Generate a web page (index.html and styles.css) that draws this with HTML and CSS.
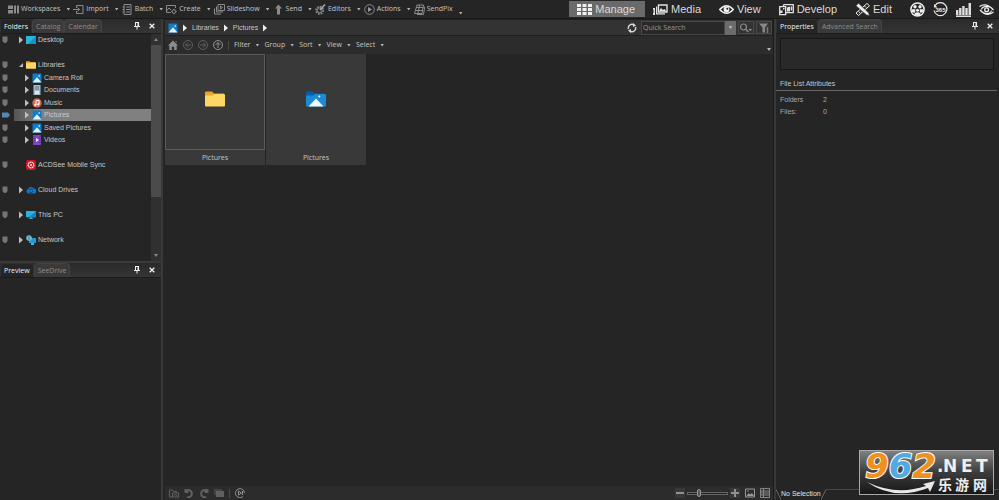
FILE: index.html
```html
<!DOCTYPE html>
<html lang="en">
<head>
<meta charset="utf-8">
<title>ACDSee - Pictures</title>
<link rel="stylesheet" href="styles.css">
</head>
<body>
<svg class="defs" aria-hidden="true">
  <symbol id="pin" viewBox="0 0 8 8"><path d="M2 .5h4M2.500 .5v4M5 .5v4M5.500 .5v4M1 4.500h6M4 4.500v3" stroke="currentColor" fill="none"/></symbol>
  <symbol id="close" viewBox="0 0 8 8"><path d="M1.700 1.700l4.600 4.600M6.300 1.700L1.700 6.300" stroke="currentColor" stroke-width="1.300" fill="none"/></symbol>
  <symbol id="flag" viewBox="0 0 6 8"><path d="M.5 .5h5v4.700L3.700 7H2.300L.5 5.200z" fill="#757575"/></symbol>
  <symbol id="flag-on" viewBox="0 0 8 6"><path d="M0 .5h6L8 3 6 5.500H0z" fill="#5785ae"/></symbol>
  <symbol id="right" viewBox="0 0 4 8"><path d="M0 .5L4 4 0 7.500z" fill="currentColor"/></symbol>
  <symbol id="open" viewBox="0 0 4 8"><path d="M4 2v4H0z" fill="currentColor"/></symbol>
  <symbol id="picture" viewBox="0 0 10 10"><rect x=".5" y=".5" width="9" height="9" rx=".6" fill="#107cc9"/><path d="M.5 9.500L5 4.300 9.500 9.500z" fill="#e4f5ff"/><circle cx="7.200" cy="3" r=".8" fill="#fff"/></symbol>
  <symbol id="folder" viewBox="0 0 20 16"><path d="M0 1.500Q0 .5 1 .5h6l2 2h10v4H0z" fill="#e9a72c"/><path d="M0 4.500h7.500l1.500-1.500h10q1 0 1 1V14.500q0 1-1 1H1q-1 0-1-1z" fill="#fdd663"/></symbol>
  <symbol id="desktop" viewBox="0 0 10 10"><rect y="1" width="10" height="8" rx=".5" fill="#29b8dc"/><path d="M10 1v8H2z" fill="#1791c9"/></symbol>
  <symbol id="monitor" viewBox="0 0 11 9"><rect width="11" height="7" rx=".5" fill="#28b2e0"/><path d="M11 0v7H3z" fill="#1687c7"/><path d="M4.500 7h2v1h1.500v1H3V8h1.500z" fill="#4b9dc5"/></symbol>
</svg>

<div class="app">
  <header class="topbar">
    <nav class="menu" aria-label="Main">
      <button><svg viewBox="0 0 11 11"><path d="M0 1.500h5v3.500H0zM0 6h5v3.500H0zM6 1.500h2v8H6zM9 1.500h2v8H9z" fill="#8b8b8b"/></svg>Workspaces<i class="caret"></i></button>
      <button><svg viewBox="0 0 11 11"><path d="M3.500 4V1.500h6.500v8H3.500V7M0 5.500h6.500M4.500 3.500l2 2-2 2" class="line"/></svg>Import<i class="caret"></i></button>
      <button><svg viewBox="0 0 11 11"><path d="M2 .5h7v10H2zM4 3h4M4 5.500h4M4 8h4M.5 3h2M.5 5.500h2M.5 8h2" class="line"/></svg>Batch<i class="caret"></i></button>
      <button><svg viewBox="0 0 11 11"><path d="M5 8.500H.5v-7h9V4M.5 7l2.500-3 2 2" class="line"/><circle cx="8" cy="7.500" r="1.800" class="line"/><path d="M8 4.800v1M8 9.200v1M5.300 7.500h1M9.700 7.500h1" class="line"/></svg>Create<i class="caret"></i></button>
      <button><svg viewBox="0 0 11 11"><path d="M4 .5h6.500v6H4zM2.500 2.500v5.500H9M.5 4.500v5.500H7M6.500 2l2 1.500-2 1.500z" class="line"/></svg>Slideshow<i class="caret"></i></button>
      <button><svg viewBox="0 0 11 11"><path d="M5.500 .5L9 4.500H7v6H4v-6H2z" fill="#8b8b8b"/></svg>Send<i class="caret"></i></button>
      <button><svg viewBox="0 0 11 11"><circle cx="4.700" cy="6.300" r="3.600" fill="none" stroke="#8b8b8b" stroke-width="1.800" stroke-dasharray="1.700 1.070"/><circle cx="4.700" cy="6.300" r="2.400" class="line"/><path d="M5 6l5-5.500" stroke="#aaa" stroke-width="1.500"/></svg>Editors<i class="caret"></i></button>
      <button><svg viewBox="0 0 11 11"><circle cx="5.500" cy="5.500" r="4.800" class="line"/><path d="M4 3l4 2.500L4 8z" fill="#999"/></svg>Actions<i class="caret"></i></button>
      <button><svg viewBox="0 0 11 11"><path d="M3 1h6.500L8 9.500H.5zM5.500 1L4 9.500M2.200 3.500h7M1.500 6.500h7M9.500 3h1.200L9.500 10.500H3" class="line"/></svg>SendPix<i class="caret low"></i></button>
    </nav>
    <nav class="modes" aria-label="Modes">
      <button class="mode active"><svg viewBox="0 0 15 13"><path d="M0 1h4v3H0zM5.500 1h4v3h-4zM11 1h4v3h-4zM0 5h4v3H0zM5.500 5h4v3h-4zM11 5h4v3h-4zM0 9h4v3H0zM5.500 9h4v3h-4zM11 9h4v3h-4z" fill="#f0f0f0"/></svg>Manage</button>
      <button class="mode"><svg viewBox="0 0 15 13"><path d="M5.500 2h8.500v7H5.500z" fill="none" stroke="#e2e2e2" stroke-width="1.400"/><path d="M6 8l2-3 2 2 1.500-1L13.500 8.500z" fill="#e2e2e2"/><path d="M3 3.500h1.300v6.700H12V11.500H3zM.5 5h1.500v7H.5zM0 5h2v1.500H0zM0 10h2v2H0z" fill="#e2e2e2"/></svg>Media</button>
      <button class="mode"><svg viewBox="0 0 15 13"><path d="M.7 6.500Q7.500-1 14.300 6.500 7.500 14 .7 6.500z" fill="#222" stroke="#eee" stroke-width="1.500"/><circle cx="7.500" cy="6.500" r="2.900" fill="#eee"/><circle cx="8.300" cy="5.700" r="1" fill="#222"/></svg>View</button>
      <button class="mode"><svg viewBox="0 0 15 13"><path d="M4.500 1.700h9.800v8H7M4.500 1.700v2M.7 3.700h6v8h-6z" fill="none" stroke="#e2e2e2" stroke-width="1.300"/><path d="M1 7.500h2.500v2.500H1zM8 4.500l3-1v5H8zM11.700 3.500h1.500v4h-1.500zM4 5h1.500v1.500H4z" fill="#e2e2e2"/></svg>Develop</button>
      <button class="mode"><svg viewBox="0 0 15 13"><path d="M12 .5l2.500 2.300L3.500 12.500 1 10z" fill="#262626" stroke="#eee"/><path d="M9.500 3l1.500 1.500M7.500 5L9 6.500M5.500 6.800L7 8.200M3.500 8.500L5 10" stroke="#eee"/><path d="M1 2.800L3.500 .3 13.500 9.700l1 2.800-3-.6z" fill="#eee" stroke="#262626" stroke-width=".5"/></svg>Edit</button>
      <button class="tool" aria-label="People"><svg viewBox="0 0 15 15"><circle cx="7.500" cy="7.500" r="6.600" fill="none" stroke="#eee" stroke-width="1.500"/><circle cx="5" cy="4.700" r="1.700" fill="#eee"/><circle cx="10" cy="4.700" r="1.700" fill="#eee"/><path d="M1.500 7.200h3.800v2L4.500 11 2 10zM13.500 7.200H9.700v2l.8 1.800 2.500-1zM4.500 13v-1.500q3-2.500 6 0V13l-3 1z" fill="#eee"/><circle cx="7.500" cy="8.200" r="1.500" fill="#eee"/></svg></button>
      <button class="tool" aria-label="365"><svg viewBox="0 0 15 15"><path d="M2 3.500A6.500 6.500 0 1 1 1 8.500" fill="none" stroke="#eee" stroke-width="1.200"/><path d="M1 2v3.500h3.500z" fill="#eee"/><text x="7.500" y="9.700" text-anchor="middle" class="days">365</text></svg></button>
      <button class="tool" aria-label="Dashboard"><svg viewBox="0 0 15 15"><path d="M0 8h2.400v5H0zM3.100 6h2.400v7H3.100zM6.200 4h2.400v9H6.200zM9.300 6h2.400v7H9.300zM12.500 1H15v12h-2.500zM0 13.600h15V15H0z" fill="#dedede"/></svg></button>
      <button class="tool" aria-label="Sync"><svg viewBox="0 0 15 15"><path d="M.5 4.500Q7 0 14.500 8 12 4.500 8 4.300 3 4.300 2.500 7.500M14.500 10Q8 15.500 1 8 4 12 8 11.500 12 11 12.500 8.500" fill="none" stroke="#eee" stroke-width="1.200"/><circle cx="7.600" cy="7.800" r="1.900" fill="none" stroke="#eee" stroke-width="1.300"/></svg></button>
    </nav>
  </header>

  <main class="work">
    <aside class="left">
      <section class="folders">
        <div class="tabs"><button class="tab on">Folders</button><button class="tab">Catalog</button><button class="tab">Calendar</button>
          <span class="panel-tools"><button aria-label="Pin"><svg><use href="#pin"/></svg></button><button aria-label="Close"><svg><use href="#close"/></svg></button></span></div>
        <div class="tree-area">
          <ul class="tree">
            <li><svg class="flag"><use href="#flag"/></svg><span class="node"><svg class="arrow"><use href="#right"/></svg><svg class="ico"><use href="#desktop"/></svg>Desktop</span></li>
            <li></li>
            <li><svg class="flag"><use href="#flag"/></svg><span class="node"><svg class="arrow"><use href="#open"/></svg><svg class="ico"><use href="#folder"/></svg>Libraries</span></li>
            <li><svg class="flag"><use href="#flag"/></svg><span class="node child"><svg class="arrow"><use href="#right"/></svg><svg class="ico"><use href="#picture"/></svg>Camera Roll</span></li>
            <li><svg class="flag"><use href="#flag"/></svg><span class="node child"><svg class="arrow"><use href="#right"/></svg><svg class="ico" viewBox="0 0 10 10"><path d="M1.500 0h7v10h-7z" fill="#a9bccb"/><path d="M3 2h4M3 4h4" stroke="#4d7ba0"/><path d="M3 6h4v3H3z" fill="#d9e6ef"/></svg>Documents</span></li>
            <li><svg class="flag"><use href="#flag"/></svg><span class="node child"><svg class="arrow"><use href="#right"/></svg><svg class="ico" viewBox="0 0 10 10"><circle cx="5" cy="5" r="4.700" fill="#d9644e"/><path d="M4 7V2.800l3-.6v4" stroke="#fff" fill="none"/><circle cx="3.300" cy="7" r="1.100" fill="#fff"/><circle cx="6.300" cy="6.300" r="1.100" fill="#fff"/></svg>Music</span></li>
            <li class="selected"><svg class="flag wide"><use href="#flag-on"/></svg><span class="node child"><svg class="arrow"><use href="#right"/></svg><svg class="ico"><use href="#picture"/></svg>Pictures</span></li>
            <li><svg class="flag"><use href="#flag"/></svg><span class="node child"><svg class="arrow"><use href="#right"/></svg><svg class="ico"><use href="#picture"/></svg>Saved Pictures</span></li>
            <li><svg class="flag"><use href="#flag"/></svg><span class="node child"><svg class="arrow"><use href="#right"/></svg><svg class="ico" viewBox="0 0 10 10"><rect x="1" width="8" height="10" rx=".8" fill="#8244c9"/><path d="M4 3l3 2-3 2z" fill="#f2e6ff"/><path d="M2 1v8M8 1v8" stroke="#4b2485" stroke-dasharray="1 1"/></svg>Videos</span></li>
            <li></li>
            <li><svg class="flag"><use href="#flag"/></svg><span class="node"><span class="arrow"></span><svg class="ico" viewBox="0 0 10 10"><rect width="10" height="10" rx="2" fill="#cc1522"/><circle cx="5" cy="5" r="2.800" fill="none" stroke="#ffe1e1" stroke-width="1.300" stroke-dasharray="1.500 .4"/><circle cx="5" cy="5" r="1" fill="#ffe1e1"/></svg>ACDSee Mobile Sync</span></li>
            <li></li>
            <li><svg class="flag"><use href="#flag"/></svg><span class="node"><svg class="arrow"><use href="#right"/></svg><svg class="ico" viewBox="0 0 10 10"><path d="M2.500 8.500a2.300 2.300 0 0 1-.3-4.500 3 3 0 0 1 5.500-.5A2.500 2.500 0 0 1 8 8.500z" fill="#1477c4"/><path d="M3 5.500a2.200 2.200 0 0 1 3.800-.8M7 6a2.200 2.200 0 0 1-3.800 1" stroke="#063563" fill="none" stroke-width=".9"/></svg>Cloud Drives</span></li>
            <li></li>
            <li><svg class="flag"><use href="#flag"/></svg><span class="node"><svg class="arrow"><use href="#right"/></svg><svg class="ico"><use href="#monitor"/></svg>This PC</span></li>
            <li></li>
            <li><svg class="flag"><use href="#flag"/></svg><span class="node"><svg class="arrow"><use href="#right"/></svg><svg class="ico" viewBox="0 0 10 10"><rect x="3" y="3" width="7" height="5" fill="#2397cf"/><path d="M5 8h3v2H5z" fill="#44b3d9"/><circle cx="3" cy="3" r="2.700" fill="#8fd3ef"/><path d="M1 2h4M3 .5v5M1 4h4" stroke="#266f99" stroke-width=".6"/></svg>Network</span></li>
          </ul>
          <div class="scroll"><i class="up"></i><i class="thumb"></i><i class="down"></i></div>
        </div>
      </section>
      <section class="preview">
        <div class="tabs"><button class="tab on">Preview</button><button class="tab">SeeDrive</button>
          <span class="panel-tools"><button aria-label="Pin"><svg><use href="#pin"/></svg></button><button aria-label="Close"><svg><use href="#close"/></svg></button></span></div>
      </section>
    </aside>

    <section class="center">
      <div class="pathbar">
        <nav class="crumbs" aria-label="Path"><svg class="ico"><use href="#picture"/></svg><svg class="arrow"><use href="#right"/></svg><a href="#">Libraries</a><svg class="arrow"><use href="#right"/></svg><a href="#">Pictures</a><svg class="arrow"><use href="#right"/></svg></nav>
        <button class="refresh" aria-label="Refresh"><svg viewBox="0 0 10 10"><path d="M1.500 6A3.600 3.600 0 0 1 7 2M8.500 4A3.600 3.600 0 0 1 3 8" fill="none" stroke="#ddd" stroke-width="1.400"/><path d="M6 0l3 2.500-3 1.500zM4 6v4L1 7.500z" fill="#ddd"/></svg></button>
        <input class="search" type="text" placeholder="Quick Search" aria-label="Quick Search">
        <button class="drop" aria-label="Search history"><i class="caret"></i></button>
        <button class="sq" aria-label="Search"><svg viewBox="0 0 14 10"><circle cx="4.500" cy="4" r="3" fill="none" stroke="#8a8a8a" stroke-width="1.200"/><path d="M6.500 6.200L9.500 9" stroke="#8a8a8a" stroke-width="1.500"/><path d="M9.500 6h3.500l-1.800 2z" fill="#999"/></svg></button>
        <button class="sq" aria-label="Filter"><svg viewBox="0 0 14 10"><path d="M2 .5h9L8 4.500V9.500H5.500v-5z" fill="#888"/><path d="M10.500 4v6" stroke="#777" stroke-width="1.500"/></svg></button>
      </div>
      <div class="toolbar">
        <button aria-label="Home"><svg viewBox="0 0 10 10"><path d="M5 .5L10 5.500H8.700V10H6.200V6.800H3.800V10H1.300V5.500H0zM7.300 1h1.200v2z" fill="#8c8c8c"/></svg></button>
        <button aria-label="Back"><svg viewBox="0 0 10 10" class="dim"><circle cx="5" cy="5" r="4.500"/><path d="M8 5H2.500M5 2.500L2.500 5 5 7.500"/></svg></button>
        <button aria-label="Forward"><svg viewBox="0 0 10 10" class="dim"><circle cx="5" cy="5" r="4.500"/><path d="M2 5h5.500M5 2.500L7.500 5 5 7.500"/></svg></button>
        <button aria-label="Up"><svg viewBox="0 0 10 10" class="lit"><circle cx="5" cy="5" r="4.500"/><path d="M5 8V2.500M2.500 5L5 2.500 7.500 5"/></svg></button>
        <i class="sep"></i>
        <div class="filters"><button>Filter<i class="caret"></i></button><button>Group<i class="caret"></i></button><button>Sort<i class="caret"></i></button><button>View<i class="caret"></i></button><button>Select<i class="caret"></i></button></div>
        <i class="caret low end"></i>
      </div>
      <div class="files">
        <figure class="tile focus"><div class="thumbnail"><svg><use href="#folder"/></svg></div><figcaption>Pictures</figcaption></figure>
        <figure class="tile"><div class="thumbnail"><svg viewBox="0 0 20 16"><path d="M0 1.500Q0 .5 1 .5h6l2 2h10v4H0z" fill="#0a5cab"/><path d="M0 4.500h7.500l1.500-1.500h10q1 0 1 1V14.500q0 1-1 1H1q-1 0-1-1z" fill="#198bd7"/><path d="M2.500 15.500L10 7.500l7.500 8z" fill="#f3faff"/><circle cx="13.300" cy="5.500" r="1" fill="#fff"/></svg></div><figcaption>Pictures</figcaption></figure>
      </div>
      <div class="bottombar">
        <button aria-label="Add to basket"><svg viewBox="0 0 10 10" class="dim"><path d="M.5 2h3l1 1.500h3V5M.5 2v7h9V5h-6v4M5 8l1.500-2L8 8"/></svg></button>
        <button aria-label="Rotate left"><svg viewBox="0 0 10 10" class="dim thick"><path d="M3 9a3.600 3.600 0 1 0-.5-6.500M1.500 1v3h3"/></svg></button>
        <button aria-label="Rotate right"><svg viewBox="0 0 10 10" class="dim thick"><path d="M7 9a3.600 3.600 0 1 1 .5-6.500M8.500 1v3h-3"/></svg></button>
        <button aria-label="Compare"><svg viewBox="0 0 10 10"><path d="M0 1h8v6H0z" fill="#444"/><path d="M2 3h8v6H2z" fill="#606060"/></svg></button>
        <i class="sep"></i>
        <button aria-label="Play"><svg viewBox="0 0 10 10" class="lit"><path d="M8 8.500A4.500 4.500 0 1 1 9.500 5M7.500 3v4"/><path d="M3.500 3l3 2-3 2z"/></svg></button>
        <div class="zoom">
          <button class="step" aria-label="Zoom out"><svg viewBox="0 0 10 10" class="lit thick"><path d="M1 5h8"/></svg></button>
          <input type="range" min="0" max="100" value="26" aria-label="Thumbnail size">
          <button class="step" aria-label="Zoom in"><svg viewBox="0 0 10 10" class="lit thick"><path d="M1 5h8M5 1v8"/></svg></button>
          <button class="view" aria-label="Thumbnails"><svg viewBox="0 0 10 10"><path d="M.5 1h9v8h-9z" stroke="#999" fill="none"/><path d="M1.500 8l2-3 1.500 1.500 2-1.500 2 3z" fill="#999"/><circle cx="3" cy="3" r=".8" fill="#999"/></svg></button>
          <button class="view" aria-label="Details"><svg viewBox="0 0 10 10"><path d="M.5 .5h9v9h-9zM.5 3h9M.5 5h9M.5 7h9M3.500 .5v9" stroke="#858585" fill="none"/></svg></button>
        </div>
      </div>
    </section>

    <aside class="right">
      <div class="tabs"><button class="tab on">Properties</button><button class="tab">Advanced Search</button>
        <span class="panel-tools"><button aria-label="Pin"><svg><use href="#pin"/></svg></button><button aria-label="Close"><svg><use href="#close"/></svg></button></span></div>
      <div class="summary"></div>
      <h2>File List Attributes</h2>
      <dl><dt>Folders</dt><dd>2</dd><dt>Files:</dt><dd>0</dd></dl>
      <div class="status"><svg viewBox="0 0 5 10"><path d="M0 0l5 10" class="edge"/></svg><span>No Selection</span><svg viewBox="0 0 5 10"><path d="M5 0L0 10" class="edge"/></svg><i></i></div>
    </aside>
  </main>

  <div class="watermark">
    <svg viewBox="0 0 133 43" role="img" aria-label="962.NET 乐游网">
      <text x="5" y="27" class="digits"><tspan class="orange">9</tspan><tspan class="blue">6</tspan><tspan class="orange">2</tspan></text>
      <text y="21" class="net"><tspan x="77">.</tspan><tspan x="83">N</tspan><tspan x="101">E</tspan><tspan x="116">T</tspan></text>
      <path d="M7 31Q36 45 66 35l-3-2 12-3-5 11-2-4Q34 50 7 31z" fill="#e8e8e8"/>
      <text y="39" class="cn"><tspan x="78">乐</tspan><tspan x="95">游</tspan><tspan x="113">网</tspan></text>
    </svg>
  </div>
</div>
</body>
</html>
```
FILE: styles.css
```css
* { box-sizing: border-box; }
body { margin: 0; background: #252525; color: #c6c6c6; font: 7px/10px "Liberation Sans", Arial, sans-serif; }
button { appearance: none; border: 0; margin: 0; padding: 0; background: none; color: inherit; font: inherit; display: flex; align-items: center; }
svg { display: block; flex: none; }
a { color: inherit; text-decoration: none; }
i { flex: none; }
.defs { position: absolute; width: 0; height: 0; }
.line { fill: none; stroke: #8b8b8b; }
.dim { fill: none; stroke: #606060; }
.lit { fill: none; stroke: #919191; }
.thick { stroke-width: 2; }
.caret { width: 4px; height: 3px; background: #b5b5b5; clip-path: polygon(0 0, 100% 0, 50% 100%); }
.sep { width: 1px; height: 9px; background: #4c4c4c; }

.app { position: relative; height: 100vh; display: flex; flex-direction: column; }
.topbar { height: 18px; display: flex; align-items: center; background: #252525; }
.menu { display: flex; gap: 3px; padding-left: 8px; font-family: "Open Sans", "Noto Sans", sans-serif; }
.menu svg { width: 11px; height: 11px; margin-right: 2px; }
.menu .caret { margin-left: 6px; }
.low { align-self: flex-end; }
.modes { display: flex; align-items: center; margin-left: auto; padding-right: 5px; }
.mode { height: 16px; padding: 0 10px 0 8px; gap: 3px; font-size: 11px; color: #dadada; }
.mode svg { width: 15px; height: 13px; }
.mode.active { background: #6a6a6a; }
.tool { margin-left: 8px; }
.tool svg { width: 15px; height: 15px; }
.days { font: bold 6px "Liberation Sans", sans-serif; fill: #eee; }

.work { flex: 1; min-height: 0; display: grid; grid-template-columns: 163px minmax(0, 1fr) 225px; border-top: 1px solid #191919; }
.left { display: flex; flex-direction: column; border-right: 2px solid #393939; min-height: 0; }
.tabs { display: flex; height: 15px; background: linear-gradient(#2a2a2a, #353535); border-bottom: 1px solid #1c1c1c; font-family: "Open Sans", "Noto Sans", sans-serif; }
.tab { padding: 0 3px; color: #8d8d8d; background: #3a3a3a; border: 1px solid #434343; border-bottom: 0; border-radius: 4px 4px 0 0; }
.tab.on { background: #252525; color: #f0f0f0; border-color: #303030; }
.panel-tools { display: flex; gap: 7px; margin-left: auto; padding-right: 5px; color: #eee; }
.panel-tools svg { width: 8px; height: 8px; }
.folders { display: flex; flex-direction: column; border-bottom: 2px solid #393939; }
.preview { flex: 1; }
.tree-area { display: flex; height: 227px; }
.tree { flex: 1; height: 212px; margin: 0; padding: 0; list-style: none; display: grid; grid-template-rows: repeat(17, minmax(0, 1fr)); }
.tree li { display: flex; align-items: center; }
.flag { width: 6px; height: 8px; margin: 0 6px 0 2px; }
.flag.wide { width: 8px; height: 6px; margin-right: 4px; }
.node { flex: 1; align-self: stretch; display: flex; align-items: center; padding-left: 5px; }
.node.child { padding-left: 11px; }
.arrow { width: 4px; height: 8px; flex: none; color: #bdbdbd; }
.ico { width: 10px; height: 10px; margin: 0 2px 0 3px; }
.selected .node { background: linear-gradient(90deg, #555, #808080 20%); color: #c9c9c9; }
.scroll { width: 10px; background: #303030; display: flex; flex-direction: column; align-items: center; padding: 4px 0; }
.up, .down { width: 4px; height: 3px; background: #888; clip-path: polygon(50% 0, 100% 100%, 0 100%); }
.down { clip-path: polygon(0 0, 100% 0, 50% 100%); margin-top: auto; }
.thumb { width: 10px; height: 152px; margin-top: 4px; background: #4b4b4b; }

.center { display: flex; flex-direction: column; min-height: 0; margin-left: 2px; border-right: 1px solid #1b1b1b; font-family: "Open Sans", "Noto Sans", sans-serif; }
.pathbar { height: 17px; display: flex; align-items: center; background: #333; border: 1px solid #202020; border-left: 0; }
.crumbs { flex: 1; display: flex; align-items: center; gap: 5px; font-family: "Liberation Sans", sans-serif; }
.crumbs .ico { margin: 0 0 0 3px; }
.crumbs .arrow { color: #eee; }
.refresh { margin-right: 4px; }
.refresh svg { width: 10px; height: 10px; }
.search { width: 84px; height: 14px; border: 1px solid #484848; padding: 0 1px; background: #282828; color: #ccc; font: inherit; outline: 0; }
.search::placeholder { color: #999; opacity: 1; }
.drop { width: 11px; height: 14px; background: #6b6b6b; justify-content: center; }
.sq { width: 16px; height: 13px; margin-left: 2px; border: 1px solid #484848; justify-content: center; }
.sq svg { width: 14px; height: 10px; }
.toolbar { height: 18px; display: flex; align-items: center; padding-left: 3px; gap: 5px; background: #2c2c2c; }
.toolbar svg { width: 10px; height: 10px; }
.filters { display: flex; gap: 5px; }
.filters .caret { margin-left: 5px; }
.end { margin: 0 2px 3px auto; }
.files { flex: 1; display: flex; align-items: flex-start; gap: 1px; background: #252525; }
.tile { width: 100px; margin: 0; background: #393939; text-align: center; }
.thumbnail { height: 96px; display: flex; align-items: center; justify-content: center; border: 1px solid #393939; }
.focus .thumbnail { border-color: #5b5b5b; }
.thumbnail svg { width: 20px; height: 16px; margin-top: -6px; }
.tile figcaption { height: 15px; line-height: 15px; }
.bottombar { height: 14px; display: flex; align-items: center; gap: 5px; padding-left: 4px; background: #2c2c2c; }
.bottombar svg { width: 10px; height: 10px; }
.zoom { margin-left: auto; display: flex; align-items: center; gap: 2px; padding-right: 3px; }
.step { background: #383838; }
.view { margin-left: 3px; }
.zoom input { appearance: none; width: 41px; height: 8px; margin: 0; background: none; }
.zoom input::-webkit-slider-runnable-track { height: 3px; border: 1px solid #656565; background: #222; }
.zoom input::-webkit-slider-thumb { appearance: none; width: 4px; height: 8px; margin-top: -4px; border: 1px solid #999; border-radius: 2px; background: #555; }

.right { display: flex; flex-direction: column; min-height: 0; border-left: 2px solid #393939; }
.summary { height: 32px; margin: 4px 5px 0 4px; border: 1px solid #171717; background: #292929; }
.right h2 { margin: 9px 2px 0 0; padding: 0 4px; height: 12px; border-bottom: 1px solid #666; font: inherit; }
.right dl { display: grid; grid-template-columns: 43px 1fr; margin: 3px 4px; row-gap: 1px; line-height: 11px; color: #a8a8a8; }
.right dd { margin: 0; }
.status { margin-top: auto; height: 11px; display: flex; color: #e0e0e0; }
.status svg { width: 5px; height: 11px; }
.status i { flex: 1; border-top: 1px solid #484848; }
.edge { stroke: #666; fill: none; }

.watermark { position: absolute; right: 5px; bottom: 5px; width: 135px; height: 45px; border: 1px solid #aaa; background: linear-gradient(#808080, #3c3c3c 50%, #171717); }
.watermark svg { width: 100%; height: 100%; overflow: visible; }
.digits { font: italic bold 34px "DejaVu Sans", sans-serif; stroke: #fff; stroke-width: 2px; paint-order: stroke; }
.orange { fill: #f0901e; }
.blue { fill: #54a9e0; }
.net { font: bold 17px "DejaVu Sans", sans-serif; fill: #eee; }
.cn { font: bold 14px "Noto Sans CJK SC", sans-serif; fill: #eee; }
```
